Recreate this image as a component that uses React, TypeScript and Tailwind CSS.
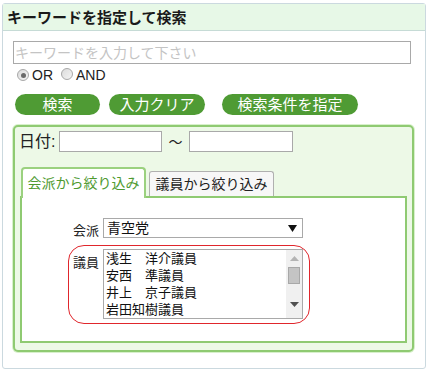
import React from "react";

const font = { fontFamily: '"Liberation Sans", "Noto Sans CJK JP", sans-serif' };

function Radio({ checked }: { checked?: boolean }) {
  return (
    <span className="relative inline-flex h-[12px] w-[12px] items-center justify-center rounded-full border border-[#a8a8a8] bg-gradient-to-br from-[#dcdcdc] to-[#f4f4f4]">
      {checked && <span className="h-[5px] w-[5px] rounded-full bg-[#6a6a6a]" />}
    </span>
  );
}

function GreenButton({ label, w, ml }: { label: string; w: string; ml: string }) {
  return (
    <div
      className={`${w} ${ml} flex h-[21px] items-center justify-center rounded-full bg-[#4f9b34] text-[15px] leading-none text-white`}
    >
      {label}
    </div>
  );
}

export default function App() {
  return (
    <div className="h-[371px] w-[428px] bg-white pl-[2px] pt-[3px] text-[#222]" style={font}>
      <div className="flex h-[366px] w-[424px] flex-col rounded-[3px] border border-[#cbd9df] bg-white">
        {/* header */}
        <div className="flex h-[27px] items-center border-b border-[#c6dbd6] bg-[#e7f8e7] pl-[4px] text-[15px] font-bold leading-none text-[#1a1a1a]">
          キーワードを指定して検索
        </div>

        <div className="flex flex-col pl-[10px]">
          {/* keyword input */}
          <div className="mt-[10px] flex h-[23px] w-[398px] items-center border border-[#a9a9a9] pl-[1px] text-[14px] leading-none text-[#c4c4c4]">
            キーワードを入力して下さい
          </div>

          {/* radios */}
          <div className="mt-[4px] flex h-[14px] items-center pl-[4px] text-[14px] leading-none text-[#222]">
            <Radio checked />
            <span className="ml-[3px]">OR</span>
            <span className="ml-[8px]">
              <Radio />
            </span>
            <span className="ml-[3px]">AND</span>
          </div>

          {/* buttons */}
          <div className="mt-[12px] flex">
            <GreenButton label="検索" w="w-[85px]" ml="ml-[2px]" />
            <GreenButton label="入力クリア" w="w-[96px]" ml="ml-[9px]" />
            <GreenButton label="検索条件を指定" w="w-[136px]" ml="ml-[17px]" />
          </div>

          {/* inner green panel */}
          <div className="mt-[10px] flex h-[227px] w-[401px] flex-col rounded-[5px] border-2 border-[#8fca72] bg-[#edf9e7] shadow-[0_0_0_1px_#d8f0cc]">
            {/* date row */}
            <div className="mt-[4px] flex h-[21px] items-center pl-[4px] text-[16px] leading-none text-[#222]">
              <span>日付:</span>
              <div className="ml-[4px] h-[21px] w-[103px] border border-[#a9a9a9] bg-white" />
              <span className="ml-[6px] text-[14px]">〜</span>
              <div className="ml-[7px] h-[21px] w-[104px] border border-[#a9a9a9] bg-white" />
            </div>

            {/* tabs */}
            <div className="ml-[5px] mt-[15px] flex h-[29px] items-end">
              <div className="relative z-10 -mb-[2px] ml-[1px] flex h-[31px] w-[125px] items-center justify-center rounded-t-[4px] border-2 border-b-0 border-[#9bd17f] bg-white pb-[2px] text-[14px] leading-none text-[#4e9a30]">
                会派から絞り込み
              </div>
              <div className="ml-[3px] flex h-[25px] w-[125px] items-center justify-center rounded-t-[3px] border border-b-0 border-[#b0b0b0] bg-[#f7f7f7] text-[14px] leading-none text-[#222]">
                議員から絞り込み
              </div>
            </div>

            <div className="ml-[5px] flex h-[147px] w-[387px] flex-col border-2 border-[#8fca72] bg-white pl-[46px] pt-[19px]">
              {/* 会派 row */}
              <div className="flex items-end border border-transparent pl-[4px] text-[13px] leading-none">
                <span className="mb-[1px] w-[30px] text-[#222]">会派</span>
                <div className="relative flex h-[20px] w-[200px] items-center border border-[#a9a9a9] bg-white pl-[3px] text-[14px] text-[#111]">
                  青空党
                  <svg className="absolute right-[5px] top-[6px]" width="9" height="7" viewBox="0 0 9 7">
                    <path d="M0 0 L9 0 L4.5 7 Z" fill="#111" />
                  </svg>
                </div>
              </div>

              {/* 議員 row */}
              <div className="mt-[6px] flex w-[242px] items-start rounded-[16px] border border-[#e0262c] pb-[4px] pl-[4px] pt-[3px] text-[13px] leading-none">
                <span className="mt-[7px] w-[30px] text-[#222]">議員</span>
                <div className="flex h-[70px] w-[200px] border border-[#a9a9a9] bg-white">
                  <div className="flex flex-1 flex-col pl-[2px] text-[13px] leading-[17px] text-[#111]">
                    <span>浅生　洋介議員</span>
                    <span>安西　準議員</span>
                    <span>井上　京子議員</span>
                    <span>岩田知樹議員</span>
                  </div>
                  <div className="flex w-[16px] flex-col items-center bg-[#f0f0f0]">
                    <svg className="mt-[6px]" width="9" height="5" viewBox="0 0 9 5">
                      <path d="M0 5 L9 5 L4.5 0 Z" fill="#b4b4b4" />
                    </svg>
                    <div className="mt-[6px] h-[17px] w-[12px] border border-[#a8a8a8] bg-[#c4c4c4]" />
                    <svg className="mt-[18px]" width="9" height="5" viewBox="0 0 9 5">
                      <path d="M0 0 L9 0 L4.5 5 Z" fill="#505050" />
                    </svg>
                  </div>
                </div>
              </div>
            </div>
          </div>
        </div>
      </div>
    </div>
  );
}
